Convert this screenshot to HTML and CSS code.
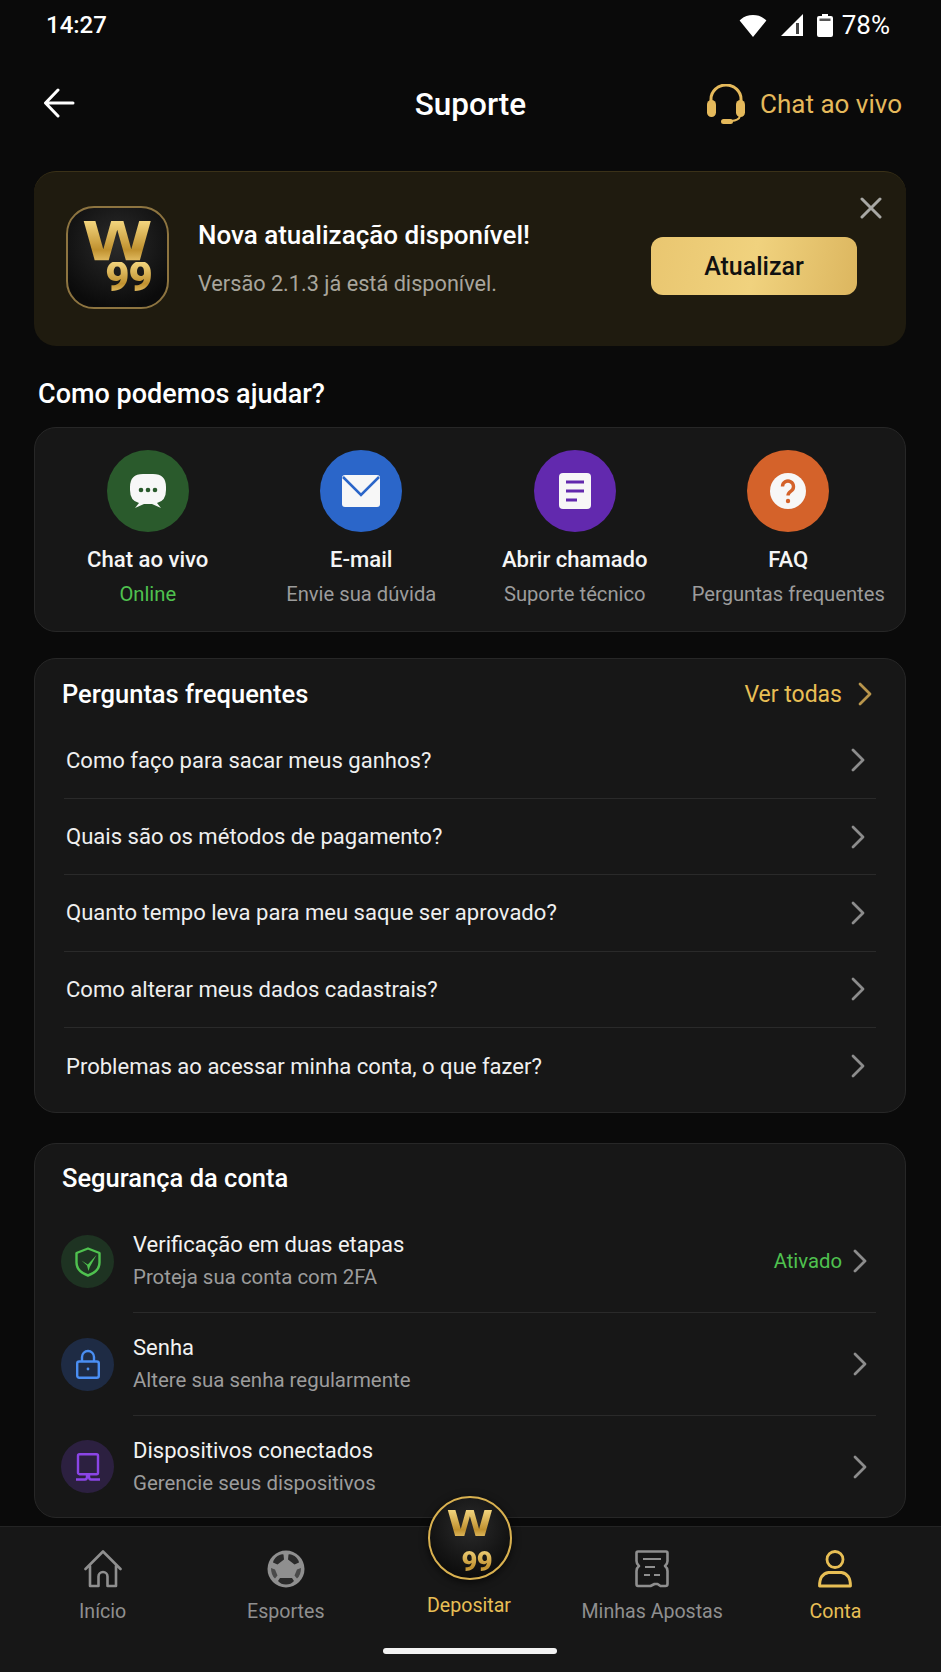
FILE: index.html
```html
<!DOCTYPE html>
<html lang="pt-BR">
<head>
    <meta charset="UTF-8">
    <meta name="viewport" content="width=device-width, initial-scale=1.0">
    <title>Suporte</title>
    <link rel="stylesheet" href="styles.css">
</head>
<body>
<div class="app">

    <!--status bar-->
    <div class="status_bar">
        <span>14:27</span>
        <div class="status_icons">
            <svg width="28" height="23" viewBox="0 0 28 23"><path d="M14 23 .6 6.5Q1 6 2 5.200 7 1 14 1t12 4.200q1 .8 1.400 1.300z" fill="#fff"/></svg>
            <svg class="signal" width="22" height="22" viewBox="0 0 22 22"><path d="M22 0v22H0z" fill="#fff"/><path d="M15 9h3v11h-3z" fill="#444"/></svg>
            <svg class="battery" width="16" height="23" viewBox="0 0 16 23"><path d="M5 0h6v2h3q2 0 2 2v17q0 2-2 2H2q-2 0-2-2V4q0-2 2-2h3z" fill="#fff"/><path d="M2.500 4.500h11V7h-11z" fill="#555"/></svg>
            <span>78%</span>
        </div>
    </div>

    <!--top bar-->
    <div class="top_bar">
        <svg class="back" width="32" height="30" viewBox="0 0 32 30"><path d="M30 15H3M15 2 2.500 15 15 28" fill="none" stroke="#fff" stroke-width="3" stroke-linecap="round" stroke-linejoin="round"/></svg>
        <h1 class="page_title">Suporte</h1>
        <div class="live_chat">
            <svg width="40" height="40" viewBox="0 0 40 40"><path d="M5 20V15a15 14 0 0 1 30 0v5" fill="none" stroke="#e5b95b" stroke-width="3"/><rect x="1" y="16" width="9" height="17" rx="4.500" fill="#e5b95b"/><rect x="30" y="16" width="9" height="17" rx="4.500" fill="#e5b95b"/><path d="M34 32q-1 4.500-9 5" fill="none" stroke="#e5b95b" stroke-width="2"/><rect x="15" y="35" width="12" height="5" rx="2.500" fill="#e5b95b"/></svg>
            <span>Chat ao vivo</span>
        </div>
    </div>

    <div class="content">

        <!--update banner-->
        <div class="update_banner">
            <div class="logo logo_tile"><div class="logo_mark"><span class="logo_w">W</span><span class="logo_num">99</span></div></div>
            <div class="update_text">
                <div class="update_title">Nova atualização disponível!</div>
                <div class="update_sub">Versão 2.1.3 já está disponível.</div>
            </div>
            <button class="update_btn">Atualizar</button>
            <svg class="update_close" width="22" height="22" viewBox="0 0 22 22"><path d="M2 2l18 18M20 2 2 20" stroke="#a8a8a4" stroke-width="3" stroke-linecap="round"/></svg>
        </div>

        <h2 class="help_title">Como podemos ajudar?</h2>

        <!--contact options-->
        <div class="card contact_card">
            <div class="contact">
                <div class="contact_icon bg_green">
                    <svg width="38" height="36" viewBox="0 0 38 36"><path d="M14 1h10q13 0 13 13v3q0 11-9 13l4 5-9-4H15l-9 4 4-5Q1 28 1 17v-3Q1 1 14 1z" fill="#f7f7f7"/><circle cx="12" cy="17" r="2.300" fill="#2a5a2c"/><circle cx="19" cy="17" r="2.300" fill="#2a5a2c"/><circle cx="26" cy="17" r="2.300" fill="#2a5a2c"/></svg>
                </div>
                <div class="contact_name">Chat ao vivo</div>
                <div class="contact_sub green">Online</div>
            </div>
            <div class="contact">
                <div class="contact_icon bg_blue">
                    <svg width="38" height="34" viewBox="0 0 38 34"><rect y="1" width="38" height="32" rx="3" fill="#f7f7f7"/><path d="M1 3l18 18L37 3" fill="none" stroke="#2b66c9" stroke-width="2.500"/></svg>
                </div>
                <div class="contact_name">E-mail</div>
                <div class="contact_sub">Envie sua dúvida</div>
            </div>
            <div class="contact">
                <div class="contact_icon bg_purple">
                    <svg width="32" height="36" viewBox="0 0 32 36"><rect width="32" height="36" rx="4" fill="#f7f7f7"/><path d="M7 9h18M7 18h18M7 27h11" stroke="#6229ae" stroke-width="3"/></svg>
                </div>
                <div class="contact_name">Abrir chamado</div>
                <div class="contact_sub">Suporte técnico</div>
            </div>
            <div class="contact">
                <div class="contact_icon bg_orange">
                    <svg width="36" height="36" viewBox="0 0 36 36"><circle cx="18" cy="18" r="18" fill="#f7f7f7"/><path d="M12.500 13.500a5.500 5.500 0 1 1 8.500 4.600c-2 1.300-3 2.200-3 4.400" fill="none" stroke="#d4622a" stroke-width="3.400"/><circle cx="18" cy="28" r="2.200" fill="#d4622a"/></svg>
                </div>
                <div class="contact_name">FAQ</div>
                <div class="contact_sub">Perguntas frequentes</div>
            </div>
        </div>

        <!--faq list-->
        <div class="card faq_card">
            <div class="card_head">
                <h3 class="card_title">Perguntas frequentes</h3>
                <div class="see_all">
                    <span>Ver todas</span>
                    <svg width="14" height="24" viewBox="0 0 14 24"><path d="M2 2l10 10L2 22" fill="none" stroke="#b8954c" stroke-width="2.800" stroke-linecap="round" stroke-linejoin="round"/></svg>
                </div>
            </div>
            <div class="faq_row">
                <span>Como faço para sacar meus ganhos?</span>
                <svg class="chevron" width="14" height="24" viewBox="0 0 14 24"><path d="M2 2l10 10L2 22"/></svg>
            </div>
            <div class="faq_row">
                <span>Quais são os métodos de pagamento?</span>
                <svg class="chevron" width="14" height="24" viewBox="0 0 14 24"><path d="M2 2l10 10L2 22"/></svg>
            </div>
            <div class="faq_row">
                <span>Quanto tempo leva para meu saque ser aprovado?</span>
                <svg class="chevron" width="14" height="24" viewBox="0 0 14 24"><path d="M2 2l10 10L2 22"/></svg>
            </div>
            <div class="faq_row">
                <span>Como alterar meus dados cadastrais?</span>
                <svg class="chevron" width="14" height="24" viewBox="0 0 14 24"><path d="M2 2l10 10L2 22"/></svg>
            </div>
            <div class="faq_row">
                <span>Problemas ao acessar minha conta, o que fazer?</span>
                <svg class="chevron" width="14" height="24" viewBox="0 0 14 24"><path d="M2 2l10 10L2 22"/></svg>
            </div>
        </div>

        <!--account security-->
        <div class="card security_card">
            <div class="card_head security_head">
                <h3 class="card_title">Segurança da conta</h3>
            </div>
            <div class="sec_row">
                <div class="sec_icon sec_green">
                    <svg width="26" height="30" viewBox="0 0 26 30"><path d="M13 1.500 24.500 6v9.500c0 6-4.500 10.500-11.500 13-7-2.500-11.500-7-11.500-13V6z" fill="none" stroke="#4fc14f" stroke-width="2.400" stroke-linejoin="round"/><path d="M6.500 13.500 12.800 17.500 21.500 8 14.800 20 13.500 24 12 18.500z" fill="#4fc14f"/></svg>
                </div>
                <div class="sec_body">
                    <div class="sec_text">
                        <div class="sec_name">Verificação em duas etapas</div>
                        <div class="sec_sub">Proteja sua conta com 2FA</div>
                    </div>
                    <span class="sec_state">Ativado</span>
                    <svg class="chevron" width="14" height="24" viewBox="0 0 14 24"><path d="M2 2l10 10L2 22"/></svg>
                </div>
            </div>
            <div class="sec_row">
                <div class="sec_icon sec_blue">
                    <svg width="24" height="30" viewBox="0 0 24 30"><path d="M6 13V8a6 6 0 0 1 12 0v5" fill="none" stroke="#4a8ef2" stroke-width="2.400"/><rect x="1.200" y="12.500" width="21.600" height="16.300" rx="2" fill="none" stroke="#4a8ef2" stroke-width="2.400"/><circle cx="12" cy="20" r="1.400" fill="#4a8ef2"/></svg>
                </div>
                <div class="sec_body">
                    <div class="sec_text">
                        <div class="sec_name">Senha</div>
                        <div class="sec_sub">Altere sua senha regularmente</div>
                    </div>
                    <svg class="chevron" width="14" height="24" viewBox="0 0 14 24"><path d="M2 2l10 10L2 22"/></svg>
                </div>
            </div>
            <div class="sec_row">
                <div class="sec_icon sec_purple">
                    <svg width="24" height="28" viewBox="0 0 24 28"><rect x="2" y="1.200" width="20" height="20" rx="1.500" fill="none" stroke="#8b45e6" stroke-width="2.400"/><path d="M0 26.500h9q2 0 2-3v-2M24 26.500h-9q-2 0-2-3v-2" fill="none" stroke="#8b45e6" stroke-width="2.400"/></svg>
                </div>
                <div class="sec_body no_line">
                    <div class="sec_text">
                        <div class="sec_name">Dispositivos conectados</div>
                        <div class="sec_sub">Gerencie seus dispositivos</div>
                    </div>
                    <svg class="chevron" width="14" height="24" viewBox="0 0 14 24"><path d="M2 2l10 10L2 22"/></svg>
                </div>
            </div>
        </div>
    </div>

    <!--bottom navigation-->
    <div class="tab_bar">
        <div class="tab">
            <svg width="38" height="38" viewBox="0 0 38 38" fill="none" stroke="#8f8f8f" stroke-width="2.600" stroke-linejoin="round" stroke-linecap="round"><path d="M1.500 19 19 1.500 36.500 19M6 16v20h8.500V26.500a4.500 4.500 0 0 1 9 0V36H32V16"/></svg>
            <span>Início</span>
        </div>
        <div class="tab">
            <svg width="38" height="38" viewBox="0 0 38 38"><circle cx="19" cy="19" r="18.500" fill="#8f8f8f"/><path d="M10.500 6q4-2.500 6-1.500l.5 5-6.500 5-4.500-2Q6.500 9 10.500 6zM27.500 6q-4-2.500-6-1.500l-.5 5 6.500 5 4.500-2Q31.500 9 27.500 6zM13 28h12l2 3q-3 3.500-8 3.500T11 31z" fill="#2a2a2a"/><path d="M4 18l4 1.500 2.500 6-2.500 3Q4 25 4 18zM34 18l-4 1.500-2.500 6 2.500 3Q34 25 34 18z" fill="#4a4a4a"/></svg>
            <span>Esportes</span>
        </div>
        <div class="tab tab_center">
            <div class="logo logo_round"><div class="logo_mark"><span class="logo_w">W</span><span class="logo_num">99</span></div></div>
            <span>Depositar</span>
        </div>
        <div class="tab">
            <svg width="38" height="38" viewBox="0 0 38 38" fill="none" stroke="#8f8f8f" stroke-width="2.600" stroke-linejoin="round"><path d="M5 1.500h28q1.500 0 1.500 1.500v8q0 3-2.500 5 2.500 2 2.500 5v13q0 2-2 2h-5l-3-2-3 0-4 2H5q-1.500 0-1.500-2V21q0-3 2.500-5-2.500-2-2.500-5V3q0-1.500 1.500-1.500z"/><path d="M10 9h18M12 17h10M11 25h6M21 25h6" stroke-width="2"/></svg>
            <span>Minhas Apostas</span>
        </div>
        <div class="tab tab_active">
            <svg width="38" height="38" viewBox="0 0 38 38" fill="none" stroke="#e8bf55" stroke-width="2.800"><circle cx="19" cy="9.500" r="8"/><path d="M3.500 36q0-12 9-13.500h13q9 1.500 9 13.500z" stroke-linejoin="round"/></svg>
            <span>Conta</span>
        </div>
        <div class="home_bar"></div>
    </div>
</div>
</body>
</html>
```

FILE: styles.css
```css
/*global*/
* {padding:0;margin:0;box-sizing:border-box;}
html,body {width:100%;height:100%;}
body {background:#0a0a0a;font-family:Roboto,"Liberation Sans",sans-serif;color:#f2f2f2;overflow:hidden;}
svg {display:block;flex-shrink:0;}
.app {width:941px;height:1672px;display:flex;flex-direction:column;}

/*status bar*/
.status_bar {height:50px;padding:0 51px 0 46px;display:flex;align-items:center;justify-content:space-between;font-size:24px;font-weight:500;color:#fff;}
.status_icons {display:flex;align-items:center;}
.status_icons span {margin-left:9px;font-size:26px;font-weight:400;}
.status_icons .signal {margin-left:14px;}
.status_icons .battery {margin-left:14px;}

/*top bar*/
.top_bar {height:108px;padding:0 39px;display:grid;grid-template-columns:1fr auto 1fr;align-items:center;}
.back {margin:-2px 0 0 4px;}
.page_title {font-size:31.500px;font-weight:500;color:#fff;}
.live_chat {display:flex;align-items:center;justify-content:flex-end;gap:14px;font-size:26px;color:#e5b95b;}

.content {padding:13px 35px 0 34px;display:flex;flex-direction:column;}

/*W99 logo*/
.logo {display:flex;align-items:center;justify-content:center;background:radial-gradient(circle at 50% 35%,#2b2b2b,#0b0b0b 80%);}
.logo_mark {display:flex;flex-direction:column;align-items:flex-end;font-weight:900;}
.logo_mark span {background:linear-gradient(180deg,#f3d57e,#c0912f 70%,#e5c066);-webkit-background-clip:text;background-clip:text;color:transparent;}
.logo_w {font-family:"DejaVu Sans",sans-serif;font-weight:700;line-height:.73;transform:scaleX(1.18);}
.logo_num {font-size:.76em;line-height:.74;margin-right:-.1em;letter-spacing:-.02em;}
.logo_tile {width:103px;height:103px;margin-bottom:4px;border-radius:28px;border:2px solid #8d7440;font-size:55px;}
.logo_round {width:84px;height:84px;border-radius:50%;border:2.500px solid #d9b150;font-size:36px;}

/*update banner*/
.update_banner {position:relative;height:175px;padding:0 49px 0 32px;display:flex;align-items:center;background:#1f1b0f;border-radius:22px;border-top:1px solid #3a3118;}
.update_text {flex:1;margin-left:29px;}
.update_title {font-size:26px;font-weight:500;color:#fff;line-height:32px;}
.update_sub {font-size:21.700px;color:#a8a59c;line-height:32px;margin-top:17px;}
.update_btn {width:206px;height:58px;margin-top:14px;border:none;border-radius:12px;background:linear-gradient(100deg,#e9c670,#f0d27e 50%,#dcb65f);font-family:inherit;font-size:25px;font-weight:500;color:#111;}
.update_close {position:absolute;top:25px;right:24px;}

.help_title {font-size:27px;font-weight:500;color:#fff;line-height:30px;margin:33px 0 18px 4px;}

/*cards*/
.card {background:#171717;border:1px solid #272727;border-radius:22px;}

/*contact options*/
.contact_card {height:205px;padding:22px 10px 0 6px;display:grid;grid-template-columns:repeat(4,1fr);}
.contact {display:flex;flex-direction:column;align-items:center;}
.contact_icon {width:82px;height:82px;border-radius:50%;display:flex;align-items:center;justify-content:center;}
.bg_green {background:#2a5a2c;}
.bg_blue {background:#2b66c9;}
.bg_purple {background:#6229ae;}
.bg_orange {background:#d4622a;}
.contact_name {font-size:22.100px;font-weight:500;color:#f5f5f5;line-height:30px;margin-top:12px;}
.contact_sub {font-size:20.200px;color:#9c9c9c;line-height:30px;margin-top:5px;white-space:nowrap;}
.contact_sub.green {color:#4fc14f;}

/*faq list*/
.faq_card {height:455px;margin-top:26px;}
.card_head {height:63.500px;padding:6.500px 33px 0 27px;display:flex;align-items:center;justify-content:space-between;}
.card_title {font-size:25.500px;font-weight:500;color:#fff;}
.see_all {display:flex;align-items:center;gap:16px;font-size:23px;color:#e8bf55;}
.faq_row {height:76.400px;margin:0 29px;padding:0 11px 0 2px;display:flex;align-items:center;justify-content:space-between;border-bottom:1px solid #2a2a2a;font-size:22.050px;color:#efefef;}
.faq_row:last-child {border-bottom:none;}
.chevron {fill:none;stroke:#8c8c8c;stroke-width:2.800;stroke-linecap:round;stroke-linejoin:round;}

/*account security*/
.security_card {height:375px;margin-top:30px;}
.security_head {height:66.500px;padding-top:.5px;}
.sec_row {height:102.500px;padding:0 29px 0 26px;display:flex;align-items:center;}
.sec_icon {width:53px;height:53px;border-radius:50%;display:flex;align-items:center;justify-content:center;}
.sec_green {background:#1e3322;}
.sec_blue {background:#1e2b44;}
.sec_purple {background:#2c2040;}
.sec_body {flex:1;height:100%;margin-left:19px;padding-right:9px;display:flex;align-items:center;border-bottom:1px solid #2a2a2a;}
.no_line {border-bottom:none;}
.sec_text {flex:1;}
.sec_name {font-size:22px;color:#f2f2f2;line-height:33px;}
.sec_sub {font-size:20.450px;color:#9c9c9c;line-height:33px;}
.sec_state {font-size:20.300px;color:#4fc14f;margin-right:11px;}

/*bottom navigation*/
.tab_bar {position:relative;height:146px;margin-top:8px;padding:23px 14px 0 11px;display:flex;background:#171717;border-top:1px solid #242424;}
.tab {flex:1;display:flex;flex-direction:column;align-items:center;font-size:19.600px;color:#8f8f8f;}
.tab span {line-height:28px;margin-top:10px;white-space:nowrap;}
.tab_active {color:#e8bf55;}
.tab_center {color:#e8bf55;padding-top:32px;}
.tab_center .logo {position:absolute;top:-31px;left:50%;margin-left:-43px;box-shadow:0 2px 8px rgba(0,0,0,.7);}
.home_bar {position:absolute;left:383px;bottom:18px;width:174px;height:6px;border-radius:3px;background:#f2f2f2;}
```
